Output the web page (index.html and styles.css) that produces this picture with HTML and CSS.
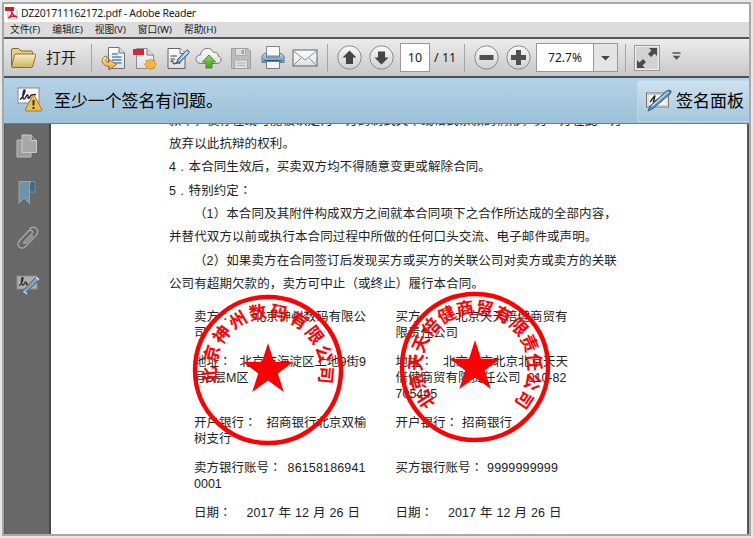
FILE: index.html
```html
<!DOCTYPE html>
<html lang="zh-CN">
<head>
<meta charset="utf-8">
<title>DZ201711162172.pdf - Adobe Reader</title>
<link rel="stylesheet" href="styles.css">
</head>
<body>
<svg width="0" height="0" class="defs">
  <defs>
    <linearGradient id="gold" x1="0" y1="0" x2="0" y2="1"><stop offset="0" stop-color="#fdf0b4"/><stop offset="1" stop-color="#dca23e"/></linearGradient>
    <linearGradient id="folder" x1="0" y1="0" x2="0" y2="1"><stop offset="0" stop-color="#faf0c4"/><stop offset="1" stop-color="#cfb263"/></linearGradient>
    <linearGradient id="paper" x1="0" y1="0" x2="0" y2="1"><stop offset="0" stop-color="#fff"/><stop offset="1" stop-color="#dcdee0"/></linearGradient>
    <linearGradient id="green" x1="0" y1="0" x2="0" y2="1"><stop offset="0" stop-color="#9ad860"/><stop offset="1" stop-color="#3f9d28"/></linearGradient>
    <linearGradient id="blue" x1="0" y1="0" x2="0" y2="1"><stop offset="0" stop-color="#b8d8ee"/><stop offset="1" stop-color="#5e93bb"/></linearGradient>
    <linearGradient id="round" x1="0" y1="0" x2="0" y2="1"><stop offset="0" stop-color="#fafafa"/><stop offset="1" stop-color="#cfcfcf"/></linearGradient>
  </defs>
</svg>
<div class="window">
  <header class="title">
    <svg width="13" height="14" viewBox="0 0 13 14"><path d="M3 1.500H9L12 4.500V13H3Z" fill="#fff" stroke="#999" stroke-width=".7"/><rect y="1" width="9" height="4" fill="#c8202c"/><path d="M3.500 12C6 10 7.500 6.500 6.800 5.500S6 9 12 11C8 9.500 5 10.500 3.500 12Z" fill="none" stroke="#c8202c" stroke-width="1.400"/></svg>
    <span>DZ201711162172.pdf - Adobe Reader</span>
  </header>
  <nav class="menu"><span>文件(F)</span><span>编辑(E)</span><span>视图(V)</span><span>窗口(W)</span><span>帮助(H)</span></nav>
  <div class="toolbar">
    <svg class="t-open" width="27" height="24" viewBox="0 0 27 24"><path d="M1.500 20V4Q1.500 2.500 3 2.500H8.500L11 5H21Q22.500 5 22.500 6.500V9" fill="#e5cf86" stroke="#7c6a35"/><path d="M1.500 21L4.500 9Q5 8 6 8H24.500Q26 8 25.600 9.500L22.800 20Q22.400 21.500 21 21.500H2Z" fill="url(#folder)" stroke="#85713a"/></svg>
    <span class="open">打开</span>
    <i class="sep s1"></i>
    <svg class="t1" width="25" height="26" viewBox="0 0 25 26"><path d="M7.500 2.500H18L23.500 8V23.500H7.500Z" fill="url(#paper)" stroke="#6d7276"/><path d="M18 2.500V8H23.500" fill="#d8dbdd" stroke="#6d7276"/><path d="M11 9H17M11 12H20.500M11 15H20.500M13 18H20.500" stroke="#4f8cc0" stroke-width="1.400"/><path d="M5.500 11C-.8 12 -.5 21 8 21.500V25L15.500 19.500L8 14.500V17.500C4.500 17.500 3.500 14.500 6.500 13Z" fill="url(#gold)" stroke="#a0701f"/></svg>
    <svg class="t2" width="24" height="26" viewBox="0 0 24 26"><path d="M3.500 3.500H14L20.500 10V23.500H3.500Z" fill="url(#paper)" stroke="#8b8f92"/><path d="M14 3.500V10H20.500" fill="#ddd" stroke="#777"/><rect x="0" y="4" width="11" height="6" fill="#dd2335"/><path d="M17.500 14L19 15.500L21.500 15L21.800 17.500L23.500 19.300L21.800 21L21.500 23.500L19 23.200L17.500 25L15.800 23.200L13.300 23.500L13.200 21L11.500 19.300L13.200 17.500L13.300 15L15.800 15.500Z" fill="#edb849" stroke="#c98d25" stroke-width=".8"/></svg>
    <svg class="t3" width="24" height="26" viewBox="0 0 24 26"><path d="M2 3.500H14L19 8.500V23.500H2Z" fill="url(#paper)" stroke="#60666b"/><path d="M14 3.500V8.500H19" fill="#fff" stroke="#60666b"/><path d="M4.500 11H11M4.500 14H9M4.500 17Q7 14 7 17T10 18T14 19" fill="none" stroke="#444" stroke-width="1.200"/><path d="M10.500 18.500L12 14L20 5.500Q21.500 4.500 22.600 6T22.500 8.500L14 17.500Z" fill="url(#blue)" stroke="#34536b"/><path d="M13 16L21 7.500" stroke="#e7f3fb"/></svg>
    <svg class="t4" width="27" height="26" viewBox="0 0 27 26"><path d="M6.500 18.500C-1 18.500 -.5 10 5.500 10C6 2.500 16 1 18.500 7.500C22 6.500 23.500 9 23 11C28 12 26.500 18.500 22 18.500Z" fill="url(#paper)" stroke="#777"/><path d="M14 10L20.500 17H17V23H11V17H7.500Z" fill="url(#green)" stroke="#458c2e"/></svg>
    <svg class="t5" width="22" height="24" viewBox="0 0 22 24"><path d="M1.500 2.500H18L20.500 5V22.500H1.500Z" fill="#bcbcbc" stroke="#9f9f9f"/><path d="M5.500 3V9.500H15.500V3M4.500 22V14H17.500V22" fill="#dedede" stroke="#a8a8a8"/><rect x="11.500" y="4" width="2.500" height="4" fill="#a0a0a0"/><path d="M6.500 17H15.500M6.500 19.500H15.500" stroke="#b5b5b5"/></svg>
    <svg class="t6" width="24" height="25" viewBox="0 0 24 25"><path d="M5.500 1.500H18.500V11H5.500Z" fill="#f8f8f8" stroke="#888"/><path d="M3.500 8.500H5.500V12H18.500V8.500H20.500L23 11V17.500H1V11Z" fill="url(#blue)" stroke="#5c7e99"/><path d="M5.500 16.500H18.500V23.500H5.500Z" fill="#f3f4f4" stroke="#777"/><path d="M3.500 15.500H20.500" stroke="#415564"/></svg>
    <svg class="t7" width="26" height="20" viewBox="0 0 26 20"><rect x="1" y="2" width="24" height="16" fill="url(#paper)" stroke="#777" stroke-width="1.200"/><path d="M1.500 3L13 12L24.500 3M1.500 17.500L9.500 9.500M24.500 17.500L16.500 9.500" fill="none" stroke="#8d8d8d"/></svg>
    <i class="sep s2"></i>
    <svg class="t8" width="25" height="25" viewBox="0 0 25 25"><circle cx="12.500" cy="12.500" r="11.700" fill="url(#round)" stroke="#8a8a8a"/><path d="M12.500 5.500L19.500 12.500H16V19H9V12.500H5.500Z" fill="#454545"/></svg>
    <svg class="t9" width="25" height="25" viewBox="0 0 25 25"><circle cx="12.500" cy="12.500" r="11.700" fill="url(#round)" stroke="#8a8a8a"/><path d="M12.500 19.500L19.500 12.500H16V6.500H9V12.500H5.500Z" fill="#454545"/></svg>
    <span class="pageno">10</span><span class="total">/ 11</span>
    <i class="sep s3"></i>
    <svg class="t10" width="25" height="25" viewBox="0 0 25 25"><circle cx="12.500" cy="12.500" r="11.700" fill="url(#round)" stroke="#8a8a8a"/><rect x="5.500" y="10" width="14" height="5" rx=".5" fill="#505050"/></svg>
    <svg class="t11" width="25" height="25" viewBox="0 0 25 25"><circle cx="12.500" cy="12.500" r="11.700" fill="url(#round)" stroke="#8a8a8a"/><path d="M10 5H15V10H20V15H15V20H10V15H5V10H10Z" fill="#505050"/></svg>
    <span class="zoom"><b>72.7%</b><svg width="24" height="26" viewBox="0 0 24 26"><path d="M7.500 11.500H16.500L12 16Z" fill="#444"/></svg></span>
    <i class="sep s4"></i>
    <svg class="t12" width="26" height="26" viewBox="0 0 26 26"><rect x=".5" y=".5" width="25" height="25" fill="#d2d2d2" stroke="#999"/><rect x="1.500" y="1.500" width="23" height="23" fill="none" stroke="#f0f0f0"/><path d="M15 3H23V11L20.500 8.500L17 12L14 9L17.500 5.500ZM3 15L5.500 17.500L9 14L12 17L8.500 20.500L11 23H3Z" fill="#4b4b4b"/></svg>
    <svg class="t13" width="9" height="9" viewBox="0 0 9 9"><path d="M.5 1H8.500" stroke="#555" stroke-width="1.500"/><path d="M.5 3.800H8.500L4.500 7.800Z" fill="#555"/></svg>
  </div>
  <div class="notice">
    <svg class="warn" width="27" height="27" viewBox="0 0 27 27"><rect x="1" y="2" width="21" height="15" fill="#fafafa" stroke="#8a8a8a"/><path d="M3 13.500C6 12 9 4 7.500 4S5 13 7 13S9 8.500 10.500 9S10 13 12 12S13 9 14.500 9L19 8.500" fill="none" stroke="#222" stroke-width="1.400"/><path d="M16.500 9.500Q17.300 9.500 17.800 10.500L24.500 23Q25.300 25 23.500 25H9.500Q7.700 25 8.500 23L15.200 10.500Q15.700 9.500 16.500 9.500Z" fill="#efbd4c" stroke="#a7792a"/><path d="M16.500 14V19.500M16.500 21V23" stroke="#343026" stroke-width="2"/></svg>
    <span class="msg">至少一个签名有问题。</span>
    <div class="panel">
      <svg width="27" height="24" viewBox="0 0 27 24"><rect x="1.500" y="4" width="22" height="14" fill="#f5f5f5" stroke="#777"/><rect x="3" y="5.500" width="19" height="11" fill="none" stroke="#ccc"/><path d="M5 13L10 6.500L8.500 13L15 9" fill="none" stroke="#222" stroke-width="1.300"/><path d="M3 22L5 17L21 2.500Q24 .5 25.500 1.500T25 5L8 19.500Z" fill="#5595c0" stroke="#315a7b"/><path d="M7 17L23 3" stroke="#bfe1f6" stroke-width="1.300"/></svg>
      <span>签名面板</span>
    </div>
  </div>
  <div class="body">
    <aside class="side">
      <svg class="a1" width="22" height="24" viewBox="0 0 22 24"><path d="M1 6H15V23H1Z" fill="#9c9c9c" stroke="#bcbcbc"/><path d="M6 1H15L20.500 6.500V18.500H6Z" fill="#a8a8a8" stroke="#cacaca"/><path d="M15 1V6.500H20.500" fill="#777" stroke="#d5d5d5"/></svg>
      <svg class="a2" width="20" height="25" viewBox="0 0 20 25"><path d="M10 1.500H18V12H12Z" fill="#47687f" stroke="#6d8ea6"/><path d="M2 1.500H14Q12.500 2.500 12.500 5V23.500L7 18L2 23.500Z" fill="#7292aa" stroke="#89a8be"/></svg>
      <svg class="a3" width="24" height="26" viewBox="0 0 24 26"><path d="M7.500 17.500L16 8.500C18 6 14.500 4 12.500 6L4 15C-1 21 5.500 26 10 21L20 10.500C25 5 18 -.5 13.500 4" fill="none" stroke="#a2a2a2" stroke-width="1.500"/><path d="M7.500 17.500Q8.500 19.500 11 17L17 10.500" fill="none" stroke="#a2a2a2" stroke-width="1.500"/></svg>
      <svg class="a4" width="25" height="22" viewBox="0 0 25 22"><rect x="1" y="2" width="20" height="13" fill="#aeaeae" stroke="#8c8c8c"/><path d="M3 12C6 10 8 3.500 6.500 3.500S5 12 7 11S9 7.500 10 8S9.500 12 12 10" fill="none" stroke="#333" stroke-width="1.300"/><path d="M5.500 20L7 16.500L20 3L23.500 2.500L23 6L9.500 19Z" fill="#7fa1b9" stroke="#476073"/><path d="M8 17.500L11 20M20 3L23 6" stroke="#d5dade" stroke-width="1.500"/></svg>
    </aside>
    <main class="doc">
      <div class="para">
        <p class="first">款中，使存在或可能被认定为一方的制式文本或格式条款的情形，另一方在此一方</p>
        <p>放弃以此抗辩的权利。</p>
        <p>4<i class="dot">.</i>本合同生效后，买卖双方均不得随意变更或解除合同。</p>
        <p>5<i class="dot">.</i>特别约定<i class="k" lang="ja">：</i></p>
        <p class="ind">（1）本合同及其附件构成双方之间就本合同项下之合作所达成的全部内容，</p>
        <p>并替代双方以前或执行本合同过程中所做的任何口头交流、电子邮件或声明。</p>
        <p class="ind">（2）如果卖方在合同签订后发现买方或买方的关联公司对卖方或卖方的关联</p>
        <p>公司有超期欠款的，卖方可中止（或终止）履行本合同。</p>
      </div>
      <div class="parties">
        <div class="party">
          <div class="h2"><p>卖方<i class="k g22" lang="ja">：</i>北京神州数码有限公</p><p>司</p></div>
          <div class="h3"><p>地址<i class="k g8" lang="ja">：</i>北京市海淀区上地9街9</p><p>号5层M区</p></div>
          <div class="h2"><p>开户银行<i class="k g10" lang="ja">：</i>招商银行北京双榆</p><p>树支行</p></div>
          <div class="h2"><p>卖方银行账号<i class="k g6" lang="ja">：</i><span class="num">86158186941</span></p><p>0001</p></div>
          <div><p class="date">日期<i class="k g15" lang="ja">：</i>2017 年 12 月 26 日</p></div>
        </div>
        <div class="party">
          <div class="h2"><p>买方<i class="k g22" lang="ja">：</i>北京天天倍健商贸有</p><p>限责任公司</p></div>
          <div class="h3"><p>地址<i class="k g10" lang="ja">：</i>北京北京北京北京天天</p><p>倍健商贸有限责任公司<span class="tel">010-82</span></p><p>705445</p></div>
          <div class="h2"><p>开户银行<i class="k g4" lang="ja">：</i>招商银行</p></div>
          <div class="h2"><p>买方银行账号<i class="k g4" lang="ja">：</i><span class="num">9999999999</span></p></div>
          <div><p class="date">日期<i class="k g15" lang="ja">：</i>2017 年 12 月 26 日</p></div>
        </div>
      </div>
      <svg class="seal seal-l" width="152" height="152" viewBox="-76 -76 152 152">
        <circle r="73" fill="none" stroke="#f00" stroke-width="4.400"/>
        <path d="M0 -27L6 -8.200H25.500L9.800 3.500L15.800 22L0 10.600L-15.800 22L-9.800 3.500L-25.500 -8.200H-6Z" fill="#f00"/>
        <g class="ring">
          <text transform="rotate(-95) translate(0 -52)">北</text><text transform="rotate(-74) translate(0 -52)">京</text><text transform="rotate(-52.500) translate(0 -52)">神</text><text transform="rotate(-31) translate(0 -52)">州</text><text transform="rotate(-10) translate(0 -52)">数</text><text transform="rotate(11) translate(0 -52)">码</text><text transform="rotate(32) translate(0 -52)">有</text><text transform="rotate(53) translate(0 -52)">限</text><text transform="rotate(74) translate(0 -52)">公</text><text transform="rotate(95) translate(0 -52)">司</text>
        </g>
      </svg>
      <svg class="seal seal-r" width="152" height="152" viewBox="-76 -76 152 152">
        <circle r="73" fill="none" stroke="#f00" stroke-width="4.400"/>
        <path d="M0 -27L6 -8.200H25.500L9.800 3.500L15.800 22L0 10.600L-15.800 22L-9.800 3.500L-25.500 -8.200H-6Z" fill="#f00"/>
        <g class="ring">
          <text transform="rotate(-123.500) translate(0 -53)">北</text><text transform="rotate(-104.500) translate(0 -53)">京</text><text transform="rotate(-85.500) translate(0 -53)">天</text><text transform="rotate(-66.500) translate(0 -53)">天</text><text transform="rotate(-47.500) translate(0 -53)">倍</text><text transform="rotate(-28.500) translate(0 -53)">健</text><text transform="rotate(-9.500) translate(0 -53)">商</text><text transform="rotate(9.500) translate(0 -53)">贸</text><text transform="rotate(28.500) translate(0 -53)">有</text><text transform="rotate(47.500) translate(0 -53)">限</text><text transform="rotate(66.500) translate(0 -53)">责</text><text transform="rotate(85.500) translate(0 -53)">任</text><text transform="rotate(104.500) translate(0 -53)">公</text><text transform="rotate(123.500) translate(0 -53)">司</text>
        </g>
      </svg>
    </main>
  </div>
</div>
</body>
</html>
```
FILE: styles.css
```css
* { box-sizing: border-box; }
body { margin: 0; height: 538px; padding: 2px; overflow: hidden; background: #e8e8e8; font-family: "Noto Sans", "Noto Sans CJK SC", sans-serif; color: #1a1a1a; }
p { margin: 0; }
i { font-style: normal; }
svg { display: block; flex: none; }
.defs { position: absolute; }
.window { width: 749px; height: 534px; border: 2px solid #a8a8a8; background: #fff; display: flex; flex-direction: column; overflow: hidden; }
.title { height: 18px; display: flex; align-items: center; gap: 3px; padding-left: 1px; font-size: 10.5px; white-space: nowrap; }
.title span { letter-spacing: -.26px; }
.menu { height: 15px; background: #dcdcdc; display: flex; align-items: center; gap: 12px; padding-left: 6px; font-size: 9.7px; line-height: 15px; white-space: nowrap; }
.toolbar { height: 41px; border-top: 2px solid #55555a; border-bottom: 2px solid #4c5054; background: linear-gradient(#ececec, #c8c8c8); display: flex; align-items: center; white-space: nowrap; }
.t-open { margin-left: 6px; }
.open { margin: -2px 0 0 9px; width: 31px; font-size: 15px; line-height: 22px; }
.sep { flex: none; width: 1px; height: 28px; background: #a6a6a6; }
.s1 { margin-left: 14px; }
.t1 { margin-left: 9px; }
.t2 { margin-left: 7px; }
.t3 { margin-left: 9px; }
.t4 { margin-left: 5px; }
.t5 { margin-left: 8px; }
.t6 { margin-left: 9px; }
.t7 { margin-left: 7px; }
.s2 { margin-left: 9px; }
.t8 { margin-left: 9px; }
.t9 { margin-left: 7px; }
.pageno { margin-left: 6px; width: 30px; height: 29px; border: 1px solid #999; background: #fff; font-size: 12.5px; line-height: 27px; text-align: center; }
.total { margin-left: 4px; width: 24px; font-size: 12.5px; }
.s3 { margin-left: 6px; }
.t10 { margin-left: 9px; }
.t11 { margin-left: 7px; }
.zoom { margin-left: 5px; width: 82px; height: 29px; border: 1px solid #999; background: #fff; display: flex; align-items: center; font-size: 12px; }
.zoom b { flex: 1; font-weight: 400; text-align: center; }
.zoom svg { height: 27px; background: #e4e4e4; border-left: 1px solid #999; }
.s4 { margin-left: 7px; }
.t12 { margin-left: 8px; }
.t13 { margin-left: 12px; margin-top: -2px; }
.notice { height: 46px; border-bottom: 1px solid #6b7f8b; background: linear-gradient(#b4d2e7, #9cc1d8); display: flex; align-items: center; color: #000; }
.warn { margin-left: 13px; margin-top: -2px; }
.msg { margin-left: 10px; font-size: 16.9px; line-height: 24px; }
.panel { margin-left: auto; width: 112px; height: 42px; border: 1px solid #bcd8e8; border-right: 0; border-radius: 3px 0 0 3px; background: linear-gradient(#cfe1ef, #a5c8dd); display: flex; align-items: center; gap: 4px; padding-left: 7px; font-size: 17px; line-height: 24px; white-space: nowrap; }
.body { flex: 1; display: flex; min-height: 0; }
.side { width: 47px; background: #686868; border-left: 1px solid #585858; border-right: 2px solid #464646; padding: 10px 0 0 11px; }
.a2 { margin: 22px 0 0 1px; }
.a3 { margin-top: 20px; }
.a4 { margin-top: 23px; }
.doc { flex: 1; position: relative; overflow: hidden; border-right: 2px solid #555; font-family: "Liberation Sans", "Noto Sans CJK SC", sans-serif; font-size: 12.5px; color: #222; padding-left: 118px; white-space: nowrap; }
.para { margin-top: -14.6px; letter-spacing: .1px; }
.para p { line-height: 23.4px; height: 23.4px; }
.para .first { padding-top: .6px; }
.para .ind { padding-left: 25px; }
.dot { display: inline-block; width: 12.5px; text-align: center; }
.k { font-family: "Noto Sans CJK JP", sans-serif; line-height: 1; }
.g4 { margin-right: 4px; }
.g6 { margin-right: 6px; }
.g8 { margin-right: 8px; }
.g10 { margin-right: 10px; }
.g15 { margin-right: 15px; }
.g22 { margin-right: 22px; }
.num { letter-spacing: .15px; }
.tel { margin-left: 7px; }
.date { word-spacing: .6px; }
.parties { display: grid; grid-template-columns: 201.5px 201.5px; padding-left: 25px; margin-top: 12.3px; }
.party p { line-height: 16.2px; height: 16.2px; }
.h2 { height: 45.2px; }
.h3 { height: 61px; }
.seal { position: absolute; }
.seal-l { left: 141px; top: 170px; }
.seal-r { left: 348px; top: 167px; }
.ring text { fill: #f00; font-family: "Noto Sans CJK SC", sans-serif; font-weight: 700; font-size: 17.5px; text-anchor: middle; }
```
